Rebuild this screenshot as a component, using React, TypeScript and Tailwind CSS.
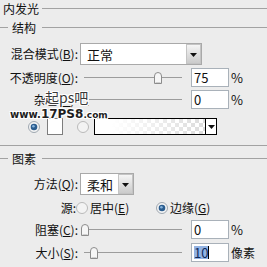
import React from 'react'

function Legend({ title, sub }: { title: string; sub?: boolean }) {
  return (
    <div className="flex h-[17px] items-center">
      {sub && <div className="h-px w-[8px] bg-[#a2a2a2]" />}
      <span className={sub ? 'pl-[4px] pr-[6px] text-[12px] leading-none' : 'pl-[3px] pr-[3px] text-[12px] leading-none'}>
        {title}
      </span>
      <div className="h-px flex-1 bg-[#a2a2a2]" />
    </div>
  )
}

function Tri() {
  return (
    <svg width="7" height="4" viewBox="0 0 7 4">
      <path d="M0 0H7L3.5 4Z" fill="#111" />
    </svg>
  )
}

function Radio({ on }: { on?: boolean }) {
  return (
    <svg width="12" height="12" viewBox="0 0 12 12" className="shrink-0">
      <circle cx="6" cy="6" r="5.5" fill="#f3f3f3" stroke={on ? '#9ea7b0' : '#b9b9b9'} />
      {on && (
        <>
          <circle cx="6" cy="6" r="3.3" fill="#2b5d8f" />
          <circle cx="5.4" cy="5.3" r="1.3" fill="#86b3dc" />
        </>
      )}
    </svg>
  )
}

function Thumb() {
  return (
    <svg width="10" height="12" viewBox="0 0 10 12">
      <path d="M1.5 11.5V4Q1.5 0.5 5 0.5Q8.5 0.5 8.5 4V11.5Z" fill="#f6f6f6" stroke="#8c8c8c" />
      <path d="M2.5 10.5H7.5" stroke="#d0d0d0" />
    </svg>
  )
}

// track from x=84 to x=182, thumb placed per value
function Slider({ thumb }: { thumb: string }) {
  return (
    <div className="relative ml-[2px] h-full w-[103px]">
      <div className="absolute left-[4px] right-[1px] top-[9px] h-px bg-[#9c9c9c]" />
      <div className={'absolute top-[4px] flex ' + thumb}>
        <Thumb />
      </div>
    </div>
  )
}

function NumBox({ children }: { children: React.ReactNode }) {
  return (
    <div className="ml-[8px] flex h-[19px] w-[38px] items-center border border-[#a9b1b9] bg-white pl-[2px] text-[13px] leading-none">
      {children}
    </div>
  )
}

function Label({ children }: { children: React.ReactNode }) {
  return <span className="w-[78px] shrink-0 text-right text-[12px] leading-none">{children}</span>
}

function Select({ value, width }: { value: string; width: string }) {
  return (
    <div className={'ml-[2px] flex h-[22px] border border-[#a9a9a9] bg-white ' + width}>
      <div className="flex flex-1 items-center pl-[6px] text-[13px] leading-none">{value}</div>
      <div className="flex w-[15px] justify-center border border-[#c4c4c4] bg-gradient-to-b from-[#f5f5f5] to-[#cbcbcb] pt-[8px]">
        <Tri />
      </div>
    </div>
  )
}

export default function App() {
  return (
    <div className="relative h-[267px] w-[267px] overflow-hidden bg-[#ececec] text-[#111] [font-family:'Noto_Sans_CJK_SC','Noto_Sans',sans-serif]">
      <Legend title="内发光" />
      <div className="mt-[2px]">
        <Legend title="结构" sub />
      </div>

      {/* blend mode */}
      <div className="mt-[7px] flex h-[22px] items-center">
        <Label>
          混合模式(<u>B</u>):
        </Label>
        <Select value="正常" width="w-[122px]" />
      </div>

      {/* opacity */}
      <div className="mt-[3px] flex h-[19px] items-center">
        <Label>
          不透明度(<u>O</u>):
        </Label>
        <Slider thumb="left-[73px]" />
        <NumBox>75</NumBox>
        <span className="ml-[2px] text-[13px] leading-none">%</span>
      </div>

      {/* noise */}
      <div className="mt-[3px] flex h-[19px] items-center">
        <Label>
          杂色(<u>N</u>):
        </Label>
        <Slider thumb="left-[0px]" />
        <NumBox>0</NumBox>
        <span className="ml-[2px] text-[13px] leading-none">%</span>
      </div>

      {/* colour / gradient */}
      <div className="mt-[9px] flex h-[17px] items-center">
        <div className="ml-[28px] flex">
          <Radio on />
        </div>
        <div className="ml-[7px] h-[17px] w-[16px] border border-[#7d7d7d] bg-white" />
        <div className="ml-[14px] flex">
          <Radio />
        </div>
        <div className="ml-[5px] flex h-[17px] w-[123px] border border-black">
          <div className="flex-1 [background:linear-gradient(to_right,#fff_15%,rgba(255,255,255,0)),repeating-conic-gradient(#dcdcdc_0_25%,#fff_0_50%)_0_0/8px_8px]" />
          <div className="flex w-[11px] items-center justify-center border-l border-black bg-white">
            <Tri />
          </div>
        </div>
      </div>

      <div className="mt-[10px] h-px bg-[#a2a2a2]" />

      <div className="mt-[4px]">
        <Legend title="图素" sub />
      </div>

      {/* technique */}
      <div className="mt-[6px] flex h-[22px] items-center">
        <Label>
          方法(<u>Q</u>):
        </Label>
        <Select value="柔和" width="w-[54px]" />
      </div>

      {/* source */}
      <div className="mt-[7px] flex h-[12px] items-center text-[12px] leading-none">
        <span className="w-[76px] text-right">源:</span>
        <Radio />
        <span className="ml-[2px] w-[66px]">
          居中(<u>E</u>)
        </span>
        <Radio on />
        <span className="ml-[2px]">
          边缘(<u>G</u>)
        </span>
      </div>

      {/* choke */}
      <div className="mt-[6px] flex h-[19px] items-center">
        <Label>
          阻塞(<u>C</u>):
        </Label>
        <Slider thumb="left-[0px]" />
        <NumBox>0</NumBox>
        <span className="ml-[2px] text-[13px] leading-none">%</span>
      </div>

      {/* size */}
      <div className="mt-[4px] flex h-[19px] items-center">
        <Label>
          大小(<u>S</u>):
        </Label>
        <Slider thumb="left-[9px]" />
        <NumBox>
          <span className="bg-[#93b3e3] text-[#0e2a5c]">10</span>
          <span className="h-[13px] w-px bg-black" />
        </NumBox>
        <span className="ml-[2px] text-[12px] leading-none">像素</span>
      </div>

      {/* watermark */}
      <div className="absolute left-[45px] top-[89px] bg-[#ececec] pr-[1px] text-[14px] leading-[16px] text-[#3a3a3a] [text-shadow:1px_1px_0_#fff,-1px_-1px_0_#fff,1px_-1px_0_#fff,-1px_1px_0_#fff]">
        起ps吧
      </div>
      <div className="absolute left-[10px] top-[108px] flex items-end font-bold leading-none text-[#1e1e1e] [font-family:'DejaVu_Sans',sans-serif] [text-shadow:1px_1px_0_#fff,-1px_-1px_0_#fff,1px_-1px_0_#fff,-1px_1px_0_#fff]">
        <span className="text-[10px]">www.</span>
        <span className="text-[12px]">17PS8</span>
        <span className="text-[9px]">.com</span>
      </div>
    </div>
  )
}
